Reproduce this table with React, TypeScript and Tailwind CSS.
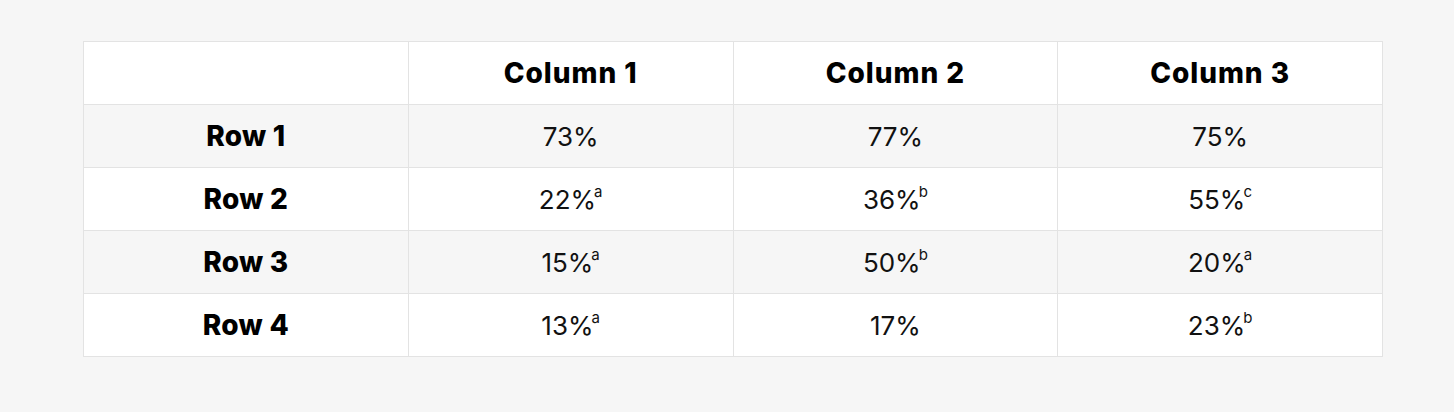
const HEAD = ['Column 1', 'Column 2', 'Column 3'];

const ROWS: { label: string; cells: [string, string][] }[] = [
  { label: 'Row 1', cells: [['73%', ''], ['77%', ''], ['75%', '']] },
  { label: 'Row 2', cells: [['22%', 'a'], ['36%', 'b'], ['55%', 'c']] },
  { label: 'Row 3', cells: [['15%', 'a'], ['50%', 'b'], ['20%', 'a']] },
  { label: 'Row 4', cells: [['13%', 'a'], ['17%', ''], ['23%', 'b']] },
];

export default function App() {
  return (
    <div className="min-h-[412px] bg-[#f6f6f6] pt-[41px] pl-[83px]" style={{ fontFamily: 'Inter, "Liberation Sans", sans-serif' }}>
      <table className="w-[1300px] table-fixed border-collapse border border-[#e3e3e3] text-black">
        <thead>
          <tr className="h-[63px] bg-white">
            <th className="border border-[#e3e3e3]" />
            {HEAD.map(h => (
              <th key={h} className="border border-[#e3e3e3] text-[28px] font-extrabold tracking-[0.035em]">{h}</th>
            ))}
          </tr>
        </thead>
        <tbody>
          {ROWS.map((row, i) => (
            <tr key={row.label} className={`h-[63px] ${i % 2 === 0 ? 'bg-[#f6f6f6]' : 'bg-white'}`}>
              <th className="border border-[#e3e3e3] text-[28px] font-extrabold tracking-[0.01em]">{row.label}</th>
              {row.cells.map(([v, note], j) => (
                <td key={j} className="border border-[#e3e3e3] text-center text-[26px] font-normal text-[#111]">
                  {v}
                  {note && <sup className="text-[15px] top-[-0.8em] -ml-[2px]">{note}</sup>}
                </td>
              ))}
            </tr>
          ))}
        </tbody>
      </table>
    </div>
  );
}
